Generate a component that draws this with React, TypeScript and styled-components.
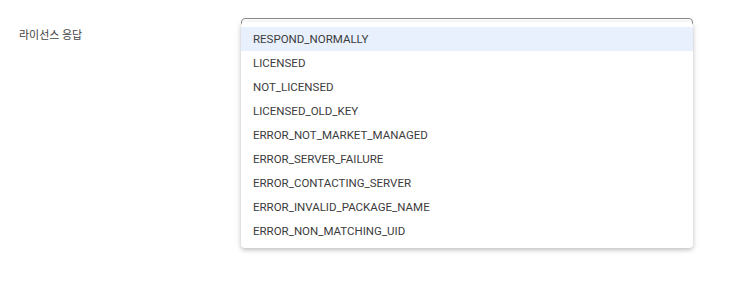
import React, { useState } from 'react'
import styled, { createGlobalStyle } from 'styled-components'

const GlobalStyle = createGlobalStyle`
  html, body {
    margin: 0;
    background: #ffffff;
  }
  body {
    font-family: Roboto, "Noto Sans CJK KR", sans-serif;
  }
`

const Page = styled.div`
  display: grid;
  grid-template-columns: 241px 452px;
  padding-top: 18px;
  height: 302px;
  box-sizing: border-box;
`

const Label = styled.div`
  padding: 8px 0 0 19px;
  font-size: 11px;
  line-height: 16px;
  color: #444444;
  font-family: "Noto Sans CJK KR", sans-serif;
`

const SelectWrap = styled.div`
  position: relative;
`

const SelectBox = styled.div`
  height: 30px;
  border: 1px solid #8a8a8a;
  border-radius: 4px;
  background: #ffffff;
`

const Menu = styled.ul`
  position: absolute;
  top: 4px;
  left: 0;
  width: 452px;
  margin: 0;
  padding: 5px 0;
  list-style: none;
  background: #ffffff;
  border-radius: 4px;
  box-shadow: 0 2px 4px rgba(0, 0, 0, 0.2), 0 1px 8px rgba(0, 0, 0, 0.08);
`

const Item = styled.li<{ $active?: boolean }>`
  height: 24px;
  line-height: 24px;
  padding: 0 12px;
  font-size: 11.5px;
  color: #3c3c3c;
  background: ${p => (p.$active ? '#e8f0fd' : 'transparent')};
`

const options = [
  'RESPOND_NORMALLY',
  'LICENSED',
  'NOT_LICENSED',
  'LICENSED_OLD_KEY',
  'ERROR_NOT_MARKET_MANAGED',
  'ERROR_SERVER_FAILURE',
  'ERROR_CONTACTING_SERVER',
  'ERROR_INVALID_PACKAGE_NAME',
  'ERROR_NON_MATCHING_UID',
]

export default function App() {
  const [active] = useState(0)

  return (
    <>
      <GlobalStyle />
      <Page>
        <Label>라이선스 응답</Label>
        <SelectWrap>
          <SelectBox />
          <Menu>
            {options.map((opt, i) => (
              <Item key={opt} $active={i === active}>
                {opt}
              </Item>
            ))}
          </Menu>
        </SelectWrap>
      </Page>
    </>
  )
}
